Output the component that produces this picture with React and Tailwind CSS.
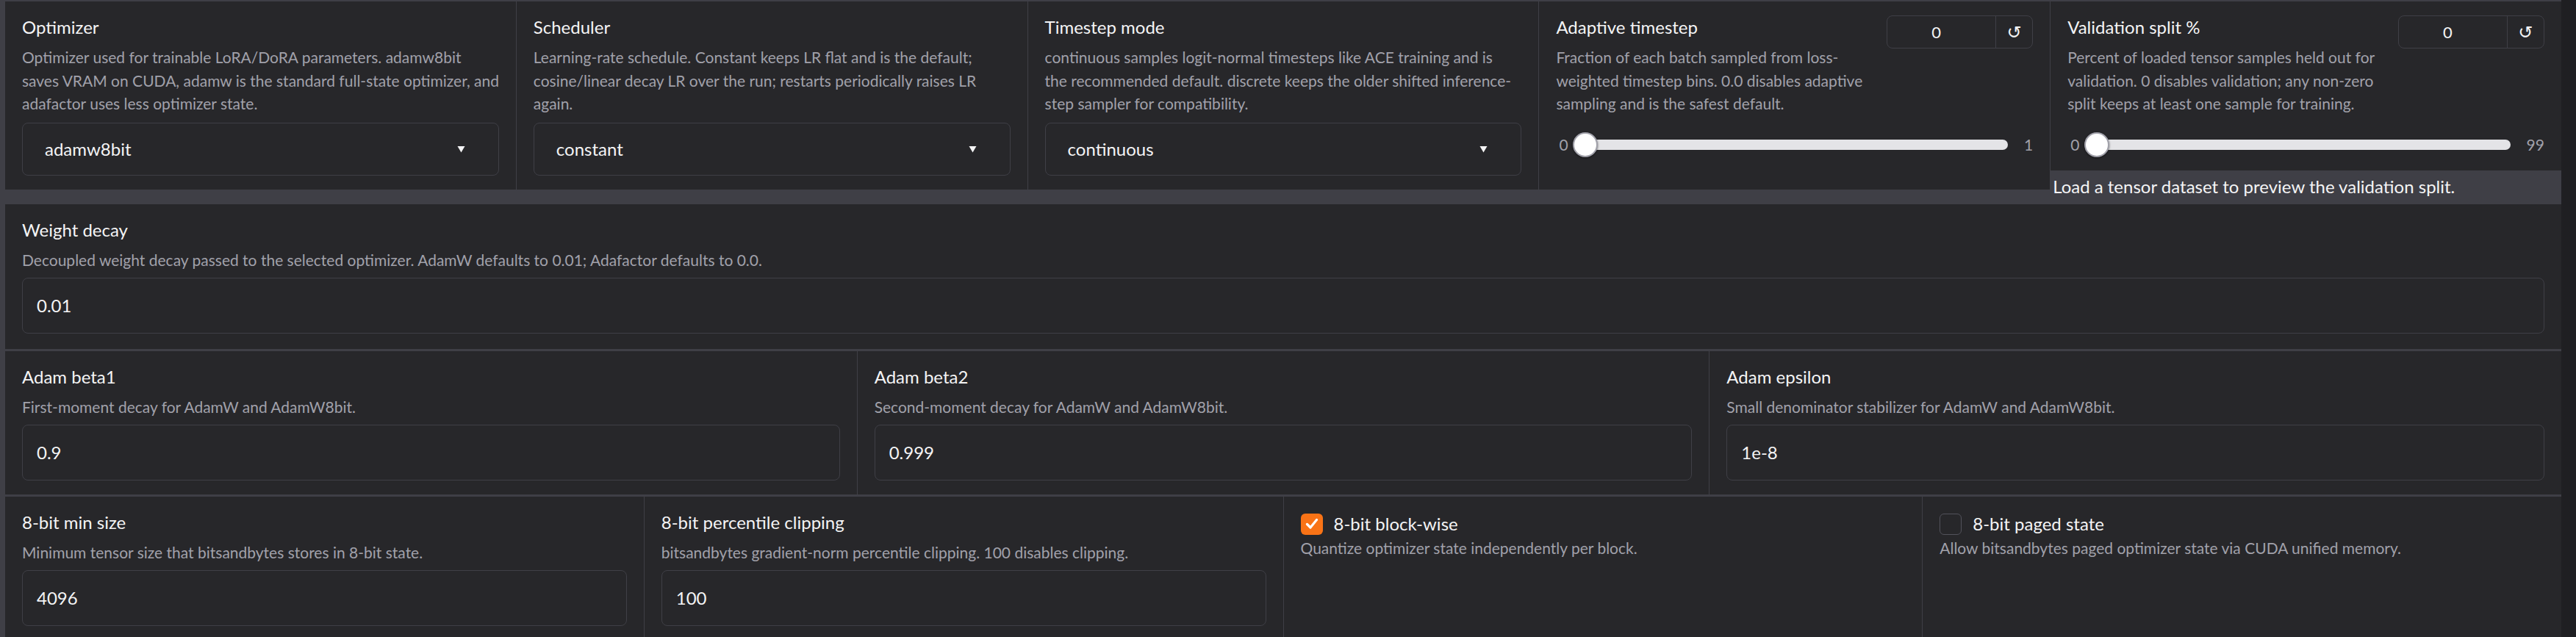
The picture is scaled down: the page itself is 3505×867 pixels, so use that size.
import React from "react";

const FONT = { fontFamily: "Lato, 'Noto Sans', 'Liberation Sans', sans-serif" };

function Title({ children }) {
  return <div className="text-[24px] leading-[32px] text-[#f4f4f5]">{children}</div>;
}

// Info text; an array is drawn one entry per line.
function Info({ children, className = "" }) {
  const body = Array.isArray(children)
    ? children.map((line, i) => (
        <span key={i} className="block whitespace-nowrap">
          {line}
        </span>
      ))
    : children;
  return (
    <p className={`mt-[9px] text-[21px] leading-[31.5px] text-[#a1a1aa] ${className}`}>{body}</p>
  );
}

function Panel({ children, className = "" }) {
  return <div className={`bg-[#27272a] px-[23px] pt-[19px] ${className}`}>{children}</div>;
}

function Caret() {
  return (
    <svg width="11" height="10" viewBox="0 0 11 10" className="shrink-0">
      <path d="M0.5 1 L10.5 1 L5.5 9.5 Z" fill="#f4f4f5" />
    </svg>
  );
}

function SelectBlock({ title, info, value }) {
  return (
    <Panel className="h-[256px]">
      <Title>{title}</Title>
      <Info>{info}</Info>
      <div className="mt-[10.5px] h-[72px] rounded-[8px] border border-[#3f3f46] flex items-center justify-between pl-[30px] pr-[45px]">
        <span className="text-[24px] text-[#f4f4f5]">{value}</span>
        <Caret />
      </div>
    </Panel>
  );
}

function NumberBox({ value }) {
  return (
    <div className="shrink-0 w-[199px] h-[45px] rounded-[8px] border border-[#3f3f46] flex">
      <div className="flex-1 flex items-center justify-center text-[22px] text-[#f4f4f5] pr-[14px]">{value}</div>
      <div
        className="w-[50px] border-l border-[#3f3f46] flex items-center justify-center text-[24px] text-[#f4f4f5]"
        style={{ fontFamily: "'DejaVu Sans', sans-serif" }}
      >
        ↺
      </div>
    </div>
  );
}

function SliderBlock({ title, info, min, max, className = "" }) {
  return (
    <Panel className={className}>
      <div className="flex gap-[22px]">
        <div className="flex-1 min-w-0">
          <Title>{title}</Title>
          <Info>{info}</Info>
        </div>
        <NumberBox value="0" />
      </div>
      <div className="mt-[23.5px] h-[34px] flex items-center">
        <span className="text-[21px] text-[#a1a1aa] pl-[4px] w-[28px]">{min}</span>
        <div className="relative flex-1 h-[14px] rounded-full bg-[#e4e4e7]">
          <div className="absolute left-[-5px] top-[-10px] w-[34px] h-[34px] rounded-full bg-white border-2 border-[#a1a1aa] shadow-[0_1px_3px_rgba(0,0,0,0.5)]" />
        </div>
        <span className="text-[21px] text-[#a1a1aa] pl-[22px]">{max}</span>
      </div>
    </Panel>
  );
}

function InputBlock({ title, info, value, className = "" }) {
  return (
    <Panel className={className}>
      <Title>{title}</Title>
      <Info>{info}</Info>
      <div className="mt-[8.5px] h-[76px] rounded-[8px] border border-[#3f3f46] flex items-center pl-[19px] text-[24px] text-[#f4f4f5]">
        {value}
      </div>
    </Panel>
  );
}

function CheckBlock({ title, info, checked }) {
  return (
    <Panel className="h-full">
      <div className="flex items-center h-[32px] mt-[2px]">
        {checked ? (
          <div className="w-[30px] h-[29px] rounded-[6px] bg-[#f97316] flex items-center justify-center">
            <svg width="18" height="16" viewBox="0 0 18 16">
              <path d="M2.5 8.5 L7 13 L15.5 2.5" fill="none" stroke="white" strokeWidth="3.2" strokeLinecap="round" strokeLinejoin="round" />
            </svg>
          </div>
        ) : (
          <div className="w-[30px] h-[29px] rounded-[6px] border border-[#52525b] bg-[#27272a]" />
        )}
        <span className="ml-[15px] text-[24px] leading-[32px] text-[#f4f4f5]">{title}</span>
      </div>
      <p className="mt-[1px] text-[21px] leading-[31.5px] text-[#a1a1aa]">{info}</p>
    </Panel>
  );
}

export default function App() {
  return (
    <div className="flex w-[3505px] h-[867px] overflow-hidden antialiased" style={FONT}>
      <div className="flex-1 min-w-0 bg-[#3f3f46] pl-[7px] pt-[2px] flex flex-col gap-[3px]">
        {/* optimizer / scheduler / timestep row */}
        <div className="grid grid-cols-5 gap-px items-start h-[273px] shrink-0">
          <SelectBlock
            title="Optimizer"
            info={[
              "Optimizer used for trainable LoRA/DoRA parameters. adamw8bit",
              "saves VRAM on CUDA, adamw is the standard full-state optimizer, and",
              "adafactor uses less optimizer state.",
            ]}
            value="adamw8bit"
          />
          <SelectBlock
            title="Scheduler"
            info={[
              "Learning-rate schedule. Constant keeps LR flat and is the default;",
              "cosine/linear decay LR over the run; restarts periodically raises LR",
              "again.",
            ]}
            value="constant"
          />
          <SelectBlock
            title="Timestep mode"
            info={[
              "continuous samples logit-normal timesteps like ACE training and is",
              "the recommended default. discrete keeps the older shifted inference-",
              "step sampler for compatibility.",
            ]}
            value="continuous"
          />
          <SliderBlock
            title="Adaptive timestep"
            info={[
              "Fraction of each batch sampled from loss-",
              "weighted timestep bins. 0.0 disables adaptive",
              "sampling and is the safest default.",
            ]}
            min="0"
            max="1"
            className="h-[256px]"
          />
          <div className="flex flex-col">
            <SliderBlock
              title="Validation split %"
              info={[
                "Percent of loaded tensor samples held out for",
                "validation. 0 disables validation; any non-zero",
                "split keeps at least one sample for training.",
              ]}
              min="0"
              max="99"
              className="h-[230px]"
            />
            <div className="pl-[3px] h-[43px] text-[24px] leading-[43px] text-[#f4f4f5] whitespace-nowrap">
              Load a tensor dataset to preview the validation split.
            </div>
          </div>
        </div>

        {/* weight decay */}
        <InputBlock
          title="Weight decay"
          info="Decoupled weight decay passed to the selected optimizer. AdamW defaults to 0.01; Adafactor defaults to 0.0."
          value="0.01"
          className="h-[197px] shrink-0"
        />

        {/* adam parameters */}
        <div className="grid grid-cols-3 gap-px h-[195px] shrink-0">
          <InputBlock title="Adam beta1" info="First-moment decay for AdamW and AdamW8bit." value="0.9" />
          <InputBlock title="Adam beta2" info="Second-moment decay for AdamW and AdamW8bit." value="0.999" />
          <InputBlock title="Adam epsilon" info="Small denominator stabilizer for AdamW and AdamW8bit." value="1e-8" />
        </div>

        {/* bitsandbytes options */}
        <div className="grid grid-cols-4 gap-px flex-1 min-h-0">
          <InputBlock title="8-bit min size" info="Minimum tensor size that bitsandbytes stores in 8-bit state." value="4096" />
          <InputBlock
            title="8-bit percentile clipping"
            info="bitsandbytes gradient-norm percentile clipping. 100 disables clipping."
            value="100"
          />
          <CheckBlock title="8-bit block-wise" info="Quantize optimizer state independently per block." checked />
          <CheckBlock title="8-bit paged state" info="Allow bitsandbytes paged optimizer state via CUDA unified memory." />
        </div>
      </div>
      <div className="w-[20px] shrink-0 bg-[#1f1f22]" />
    </div>
  );
}
